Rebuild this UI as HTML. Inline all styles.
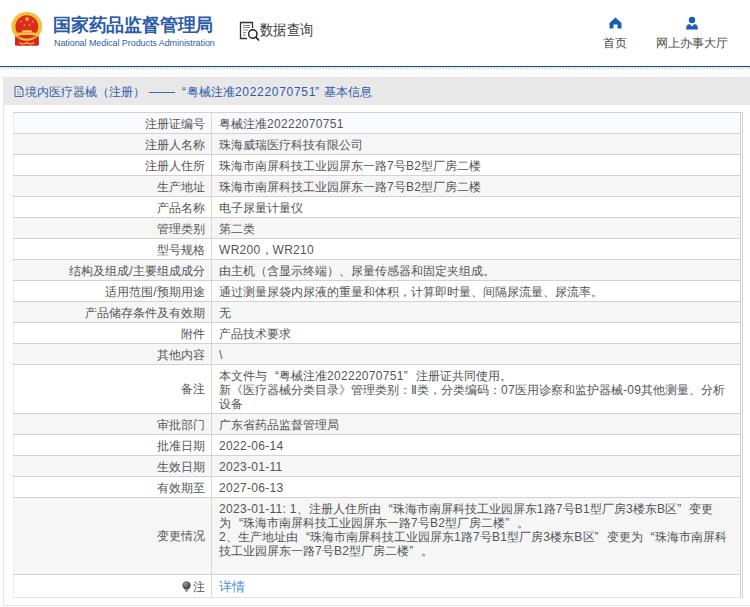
<!DOCTYPE html>
<html><head><meta charset="utf-8">
<style>
*{margin:0;padding:0;box-sizing:border-box;}
html,body{width:750px;height:607px;overflow:hidden;background:#fff;font-family:"Liberation Sans",sans-serif;}
.abs{position:absolute;white-space:nowrap;}
#emb{position:absolute;left:0;top:0;}
#t1{position:absolute;left:53px;top:14px;font-size:18px;line-height:22px;font-weight:bold;color:#2b5ba9;white-space:nowrap;letter-spacing:-0.2px;}
#t2{position:absolute;left:54px;top:38px;font-size:9px;line-height:11px;color:#2f5fae;white-space:nowrap;letter-spacing:-0.07px;}
#sq{position:absolute;left:238px;top:20px;width:22px;height:22px;}
#sqt{position:absolute;left:260px;top:21px;font-size:13px;line-height:16px;color:#3a3a3a;white-space:nowrap;transform:scale(1.03,1.17);transform-origin:0 0;}
.nav{position:absolute;top:37px;font-size:12px;line-height:13px;color:#4a4a4a;white-space:nowrap;}
#line{position:absolute;left:0;top:66px;width:750px;height:1px;background:#1f4e86;}
#line2{position:absolute;left:0;top:67px;width:750px;height:1px;background:#d8eaf6;}
#hatch{position:absolute;left:0;top:68px;width:750px;height:2px;
 background:repeating-linear-gradient(135deg,#b8cfe6 0 1px,#fff 1px 3px);}
#box{position:absolute;left:3px;top:77px;width:760px;height:529px;border:1px solid #e3e3e3;background:#fff;}
#band{position:absolute;left:3px;top:77px;width:747px;height:28px;background:#e8e8e8;}
.bt{position:absolute;top:85px;font-size:12px;line-height:14px;color:#2f5ca6;white-space:nowrap;}
.bt .n{letter-spacing:0.7px;}
#bico{position:absolute;left:14px;top:85px;width:10px;height:12px;}
table{position:absolute;left:13px;top:112px;width:728px;border-collapse:collapse;font-size:12px;color:#555;table-layout:fixed;}
td{border-top:1px solid #d2d2d2;border-bottom:1px solid #d2d2d2;height:21px;line-height:14px;padding:4px 6px 2px 7px;vertical-align:top;white-space:nowrap;overflow:hidden;}
td.l{width:198px;text-align:right;border-right:1px solid #d8d8d8;border-left:1px solid #f0f0f0;}
td.mid{vertical-align:middle;padding-top:3px;padding-bottom:3px;}
td.v{text-align:left;border-right:1px solid #d2d2d2;}
td.zhu,td.lnk{vertical-align:middle;padding-top:3px;padding-bottom:2px;}
.pin{vertical-align:-1px;margin-right:2px;}
.n{letter-spacing:0.3px;}
tr{background:#fff;}
tr:nth-child(even){background:#f6f6f6;}
tr.first{background:#f9fafd;}
tr:last-child td{border-bottom-color:#e2e2e2;}
.q{display:inline-block;width:12px;}
.ql{text-align:right;}
.qr{text-align:left;}
a{color:#4a8edb;text-decoration:none;font-size:13px;line-height:16px;}
#rline{position:absolute;left:742px;top:112px;width:1px;height:486px;background:#d2d2d2;}
#rtop{position:absolute;left:740px;top:112px;width:3px;height:1px;background:#d2d2d2;}
#rbot{position:absolute;left:740px;top:597px;width:3px;height:1px;background:#e2e2e2;}
</style></head><body>
 <svg id="emb" width="50" height="50" viewBox="0 0 50 50">
  <path d="M15.2 34.5 L38.6 34.5 L38.9 44.2 Q38.9 45.8 37.2 45.8 L16.8 45.8 Q15 45.8 15 44.2 Z" fill="#d9281e"/>
  <ellipse cx="26.8" cy="26.4" rx="15.4" ry="14.4" fill="#efc13c"/>
  <circle cx="26.8" cy="26.6" r="11.4" fill="#dd2b1e"/>
  <polygon points="27.10,16.30 27.76,18.19 29.76,18.23 28.17,19.45 28.75,21.37 27.10,20.22 25.45,21.37 26.03,19.45 24.44,18.23 26.44,18.19" fill="#f6d14a"/>
  <polygon points="20.90,20.30 21.21,21.18 22.14,21.20 21.39,21.76 21.66,22.65 20.90,22.12 20.14,22.65 20.41,21.76 19.66,21.20 20.59,21.18" fill="#f1c546"/>
  <polygon points="32.80,20.30 33.11,21.18 34.04,21.20 33.29,21.76 33.56,22.65 32.80,22.12 32.04,22.65 32.31,21.76 31.56,21.20 32.49,21.18" fill="#f1c546"/>
  <polygon points="24.50,23.70 24.78,24.51 25.64,24.53 24.96,25.05 25.21,25.87 24.50,25.38 23.79,25.87 24.04,25.05 23.36,24.53 24.22,24.51" fill="#f1c546"/>
  <polygon points="29.40,23.70 29.68,24.51 30.54,24.53 29.86,25.05 30.11,25.87 29.40,25.38 28.69,25.87 28.94,25.05 28.26,24.53 29.12,24.51" fill="#f1c546"/>
  <path d="M21.8 32.6 L22.6 30.2 L31.4 30.2 L32.2 32.6 Z" fill="#f5d050"/>
  <path d="M17.5 35 L18.5 32.4 L35.3 32.4 L36.3 35 Z" fill="#f1c546"/>
  <path d="M18 36.2 Q26.8 40 35.6 36.2" fill="none" stroke="#d9281e" stroke-width="1"/>
  <path d="M16 38 Q17 41 15.5 44 M37.6 38 Q36.6 41 38.1 44" fill="none" stroke="#b81c16" stroke-width="0.8"/>
  <path d="M19.5 42.5 Q23 45.5 26.8 42.5 Q30.6 45.5 34.1 42.5" fill="none" stroke="#f3c846" stroke-width="1.2"/>
 </svg>
 <div id="t1">国家药品监督管理局</div>
 <div id="t2">National Medical Products Administration</div>
 <svg id="sq" viewBox="0 0 22 22">
  <path d="M14.5 8 V2.5 H2.5 V18.5 H9" fill="none" stroke="#333" stroke-width="1.3"/>
  <path d="M5 5.5 H12 M5 7.5 H12 M5 10 H10 M5 12.5 H8 M5 15 H8" stroke="#888" stroke-width="1"/>
  <circle cx="14.8" cy="14" r="4.2" fill="#fff" stroke="#222" stroke-width="1.4"/>
  <path d="M17.8 17 L21 20.5" stroke="#222" stroke-width="1.8"/>
 </svg>
 <div id="sqt">数据查询</div>
 <svg class="abs" style="left:609px;top:17px;" width="13" height="12" viewBox="0 0 13 12"><path d="M6.5 0.5 L12.5 6 V11.5 H8.5 V7.5 H4.5 V11.5 H0.5 V6 Z" fill="#1a5fb4"/></svg>
 <div class="nav" style="left:603px;">首页</div>
 <svg class="abs" style="left:685px;top:16px;" width="14" height="14" viewBox="0 0 14 14"><circle cx="7" cy="4" r="3.2" fill="#1a5fb4"/><path d="M1 13.5 Q1.2 8.3 4.5 8 L7 10.5 L9.5 8 Q12.8 8.3 13 13.5 Z" fill="#1a5fb4"/></svg>
 <div class="nav" style="left:656px;">网上办事大厅</div>
<div id="line"></div><div id="line2"></div>
<svg class="abs" style="left:0;top:68px" width="750" height="2"><defs><pattern id="hp" width="3" height="2" patternUnits="userSpaceOnUse"><rect x="2" y="0" width="1" height="1" fill="#c4d6e8"/><rect x="1" y="1" width="1" height="1" fill="#dde8f2"/></pattern></defs><rect width="750" height="2" fill="url(#hp)"/></svg>
<div id="box"></div>
<div id="band"></div>
<svg id="bico" viewBox="0 0 10 12"><path d="M1 1.5 H6.5 L9 4 V11.5 H1 Z M6.5 1.5 V4 H9" fill="none" stroke="#4a62a8" stroke-width="1"/><path d="M3 4.5 H5 M3 7 H7 M3 9.3 H7" stroke="#7a8cc0" stroke-width="0.8"/></svg>
<div class="bt" style="left:25px">境内医疗器械（注册）</div>
<div class="abs" style="left:149px;top:92px;width:26px;height:1px;background:#3a64ab"></div>
<div class="bt" style="left:182px">“</div>
<div class="bt" style="left:187px">粤械注准<span class="n">20222070751</span></div>
<div class="bt" style="left:315px">”</div>
<div class="bt" style="left:324px">基本信息</div>
<table>
 <tr class="first"><td class="l">注册证编号</td><td class="v">粤械注准<span class="n">20222070751</span></td></tr>
 <tr><td class="l">注册人名称</td><td class="v">珠海威瑞医疗科技有限公司</td></tr>
 <tr><td class="l">注册人住所</td><td class="v">珠海市南屏科技工业园屏东一路<span class="n">7</span>号<span class="n">B2</span>型厂房二楼</td></tr>
 <tr><td class="l">生产地址</td><td class="v">珠海市南屏科技工业园屏东一路<span class="n">7</span>号<span class="n">B2</span>型厂房二楼</td></tr>
 <tr><td class="l">产品名称</td><td class="v">电子尿量计量仪</td></tr>
 <tr><td class="l">管理类别</td><td class="v">第二类</td></tr>
 <tr><td class="l">型号规格</td><td class="v"><span class="n">WR200</span>，<span class="n">WR210</span></td></tr>
 <tr><td class="l">结构及组成<span class="n">/</span>主要组成成分</td><td class="v">由主机（含显示终端）、尿量传感器和固定夹组成。</td></tr>
 <tr><td class="l">适用范围<span class="n">/</span>预期用途</td><td class="v">通过测量尿袋内尿液的重量和体积，计算即时量、间隔尿流量、尿流率。</td></tr>
 <tr><td class="l">产品储存条件及有效期</td><td class="v">无</td></tr>
 <tr><td class="l">附件</td><td class="v">产品技术要求</td></tr>
 <tr><td class="l">其他内容</td><td class="v"><span class="n">\</span></td></tr>
 <tr style="height:49px"><td class="l mid">备注</td><td class="v">本文件与<span class="q ql">“</span>粤械注准<span class="n">20222070751</span><span class="q qr">”</span>注册证共同使用。<br>新《医疗器械分类目录》管理类别：Ⅱ类，分类编码：<span class="n">07</span>医用诊察和监护器械<span class="n">-09</span>其他测量、分析<br>设备</td></tr>
 <tr><td class="l">审批部门</td><td class="v">广东省药品监督管理局</td></tr>
 <tr><td class="l">批准日期</td><td class="v"><span class="n">2022-06-14</span></td></tr>
 <tr><td class="l">生效日期</td><td class="v"><span class="n">2023-01-11</span></td></tr>
 <tr><td class="l">有效期至</td><td class="v"><span class="n">2027-06-13</span></td></tr>
 <tr style="height:77px"><td class="l mid">变更情况</td><td class="v"><span class="n">2023-01-11: 1</span>、注册人住所由<span class="q ql">“</span>珠海市南屏科技工业园屏东<span class="n">1</span>路<span class="n">7</span>号<span class="n">B1</span>型厂房<span class="n">3</span>楼东<span class="n">B</span>区<span class="q qr">”</span>变更<br>为<span class="q ql">“</span>珠海市南屏科技工业园屏东一路<span class="n">7</span>号<span class="n">B2</span>型厂房二楼<span class="q qr">”</span>。<br><span class="n">2</span>、生产地址由<span class="q ql">“</span>珠海市南屏科技工业园屏东<span class="n">1</span>路<span class="n">7</span>号<span class="n">B1</span>型厂房<span class="n">3</span>楼东<span class="n">B</span>区<span class="q qr">”</span>变更为<span class="q ql">“</span>珠海市南屏科<br>技工业园屏东一路<span class="n">7</span>号<span class="n">B2</span>型厂房二楼<span class="q qr">”</span>。</td></tr>
 <tr style="height:23px"><td class="l zhu"><svg class="pin" width="9" height="11" viewBox="0 0 9 11"><defs><radialGradient id="pg" cx="0.35" cy="0.3" r="0.7"><stop offset="0" stop-color="#9a9a9a"/><stop offset="1" stop-color="#3a3a3a"/></radialGradient></defs><path d="M4.5 0.3 C7 0.3 8.7 2.1 8.7 4.3 C8.7 6.3 7.2 7.3 6.3 8.5 L2.7 8.5 C1.8 7.3 0.3 6.3 0.3 4.3 C0.3 2.1 2 0.3 4.5 0.3 Z" fill="url(#pg)"/><rect x="3" y="9.2" width="3" height="1.3" fill="#777"/></svg>注</td><td class="v lnk"><a>详情</a></td></tr>
</table>
<div id="rline"></div><div id="rtop"></div><div id="rbot"></div>
</body></html>
